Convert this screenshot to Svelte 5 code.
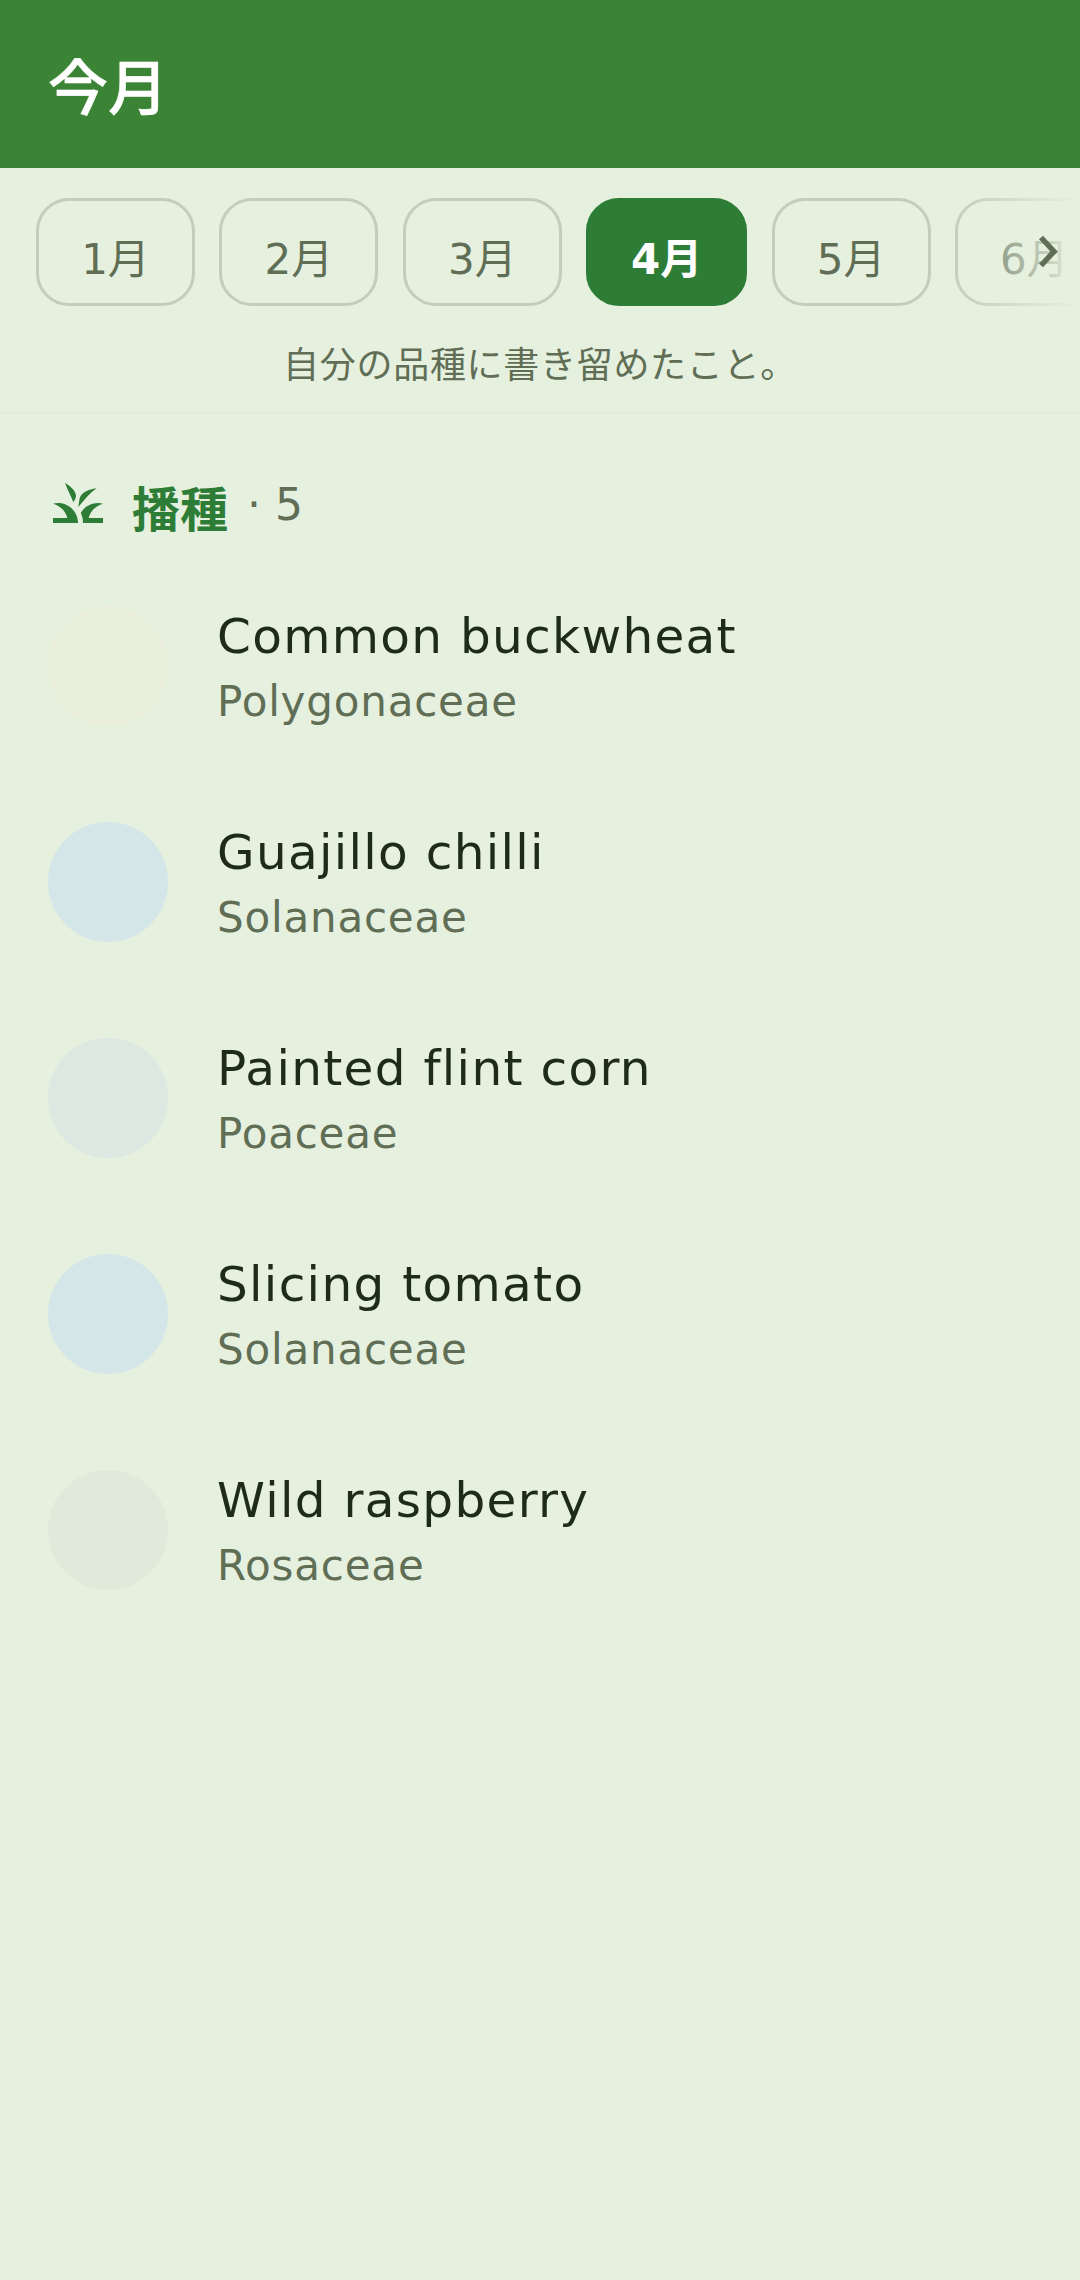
<script lang="ts">
	const months = ['1月', '2月', '3月', '4月', '5月', '6月', '7月', '8月'];
	const current = '4月';
	const plants = [
		{ name: 'Common buckwheat', family: 'Polygonaceae', tint: '#eaefdc' },
		{ name: 'Guajillo chilli', family: 'Solanaceae', tint: '#d5e6e8' },
		{ name: 'Painted flint corn', family: 'Poaceae', tint: '#dce8e2' },
		{ name: 'Slicing tomato', family: 'Solanaceae', tint: '#d5e6e8' },
		{ name: 'Wild raspberry', family: 'Rosaceae', tint: '#dfeadb' }
	];
</script>

<div class="screen">
	<header class="topbar">
		<h1>今月</h1>
	</header>

	<div class="month-strip">
		<div class="chips">
			{#each months as month}
				<div class="chip" class:active={month === current}>{month}</div>
			{/each}
		</div>
		<div class="fade"></div>
		<svg class="chevron" viewBox="0 0 20 33" aria-hidden="true">
			<path d="M3 2.5 16 16.5 3 30.5" fill="none" stroke="#5f6e55" stroke-width="5.5" />
		</svg>
	</div>

	<p class="note">自分の品種に書き留めたこと。</p>

	<section class="list">
		<div class="section-head">
			<svg class="grass" viewBox="0 0 24 24" aria-hidden="true">
				<path
					d="M12 20H2v-2h5.75C7.02 15.19 4.81 12.99 2 12.26 2.64 12.1 3.31 12 4 12c4.42 0 8 3.58 8 8zM22 12.26c-.64-.16-1.31-.26-2-.26-2.94 0-5.51 1.59-6.9 3.95.43.93.9 2.05.9 4.05h8v-2h-5.75c.73-2.81 2.94-5.01 5.75-5.74zM6.8 4c2.7 1.5 4.4 3.5 4.4 5.2 0 .8-.6 1.8-1.1 2.5C9.4 9.5 7.9 7 6.8 4zM19.5 6.1c-3.5.4-6.5 1.9-6.9 4.4-.2 1.2-.4 2.2-.5 3.2 1.9-2.2 3.9-5.2 7.4-7.6z"
				/>
			</svg>
			<span class="section-title">播種</span>
			<span class="section-count">· 5</span>
		</div>

		{#each plants as plant}
			<div class="plant">
				<div class="avatar" style="background: {plant.tint}"></div>
				<div class="plant-text">
					<div class="plant-name">{plant.name}</div>
					<div class="plant-family">{plant.family}</div>
				</div>
			</div>
		{/each}
	</section>
</div>

<style>
	:global(body) {
		margin: 0;
		background: #e6f0df;
	}

	.screen {
		width: 1080px;
		height: 2280px;
		overflow: hidden;
		background: #e6f0df;
		font-family: 'DejaVu Sans', 'Noto Sans CJK JP', sans-serif;
	}

	.topbar {
		height: 168px;
		box-sizing: border-box;
		padding: 49px 48px 0;
		background: #3b8335;
	}

	.topbar h1 {
		margin: 0;
		font-size: 60px;
		line-height: 80px;
		font-weight: 500;
		-webkit-text-stroke: 0.6px #fff;
		color: #fff;
	}

	.month-strip {
		position: relative;
		margin-top: 30px;
		overflow: hidden;
	}

	.chips {
		display: flex;
		gap: 24.4px;
		padding-left: 36px;
	}

	.chip {
		flex: none;
		box-sizing: border-box;
		width: 159px;
		height: 108px;
		padding-top: 6px;
		border: 3px solid #c5ccb8;
		border-radius: 33px;
		display: flex;
		align-items: center;
		justify-content: center;
		font-size: 42px;
		color: #5f6e55;
	}

	.chip.active {
		width: 161px;
		border-color: #2e7d37;
		background: #2e7d37;
		color: #fff;
		font-weight: 700;
	}

	.fade {
		position: absolute;
		top: 0;
		right: 0;
		bottom: 0;
		width: 130px;
		background: linear-gradient(to right, rgba(230, 240, 223, 0), #e6f0df);
	}

	.chevron {
		position: absolute;
		top: 37px;
		right: 22px;
		width: 20px;
		height: 33px;
	}

	.note {
		margin: 33px 0 0;
		padding-bottom: 19px;
		border-bottom: 3px solid #e2ecdb;
		font-size: 36px;
		line-height: 53px;
		letter-spacing: 0.7px;
		text-align: center;
		color: #5f6e55;
	}

	.list {
		padding: 62px 48px 0;
	}

	.section-head {
		display: flex;
		align-items: center;
		height: 60px;
		margin-bottom: 70px;
	}

	.grass {
		width: 60px;
		height: 60px;
		margin-bottom: 6px;
		fill: #2e7d37;
		flex: none;
	}

	.section-title {
		margin-left: 24px;
		font-size: 48px;
		font-weight: 700;
		color: #2e7d37;
	}

	.section-count {
		margin-left: 19px;
		margin-bottom: 3px;
		font-size: 44px;
		color: #5f6e55;
	}

	.plant {
		display: flex;
		align-items: center;
		gap: 49px;
		height: 120px;
		margin-bottom: 96px;
	}

	.avatar {
		width: 120px;
		height: 120px;
		border-radius: 50%;
		flex: none;
	}

	.plant-text {
		padding-top: 5px;
	}

	.plant-name {
		font-size: 48.5px;
		line-height: 65px;
		letter-spacing: 1.3px;
		color: #1e2a1a;
	}

	.plant-family {
		font-size: 42px;
		line-height: 65px;
		letter-spacing: 0.8px;
		color: #5f6e55;
	}
</style>
